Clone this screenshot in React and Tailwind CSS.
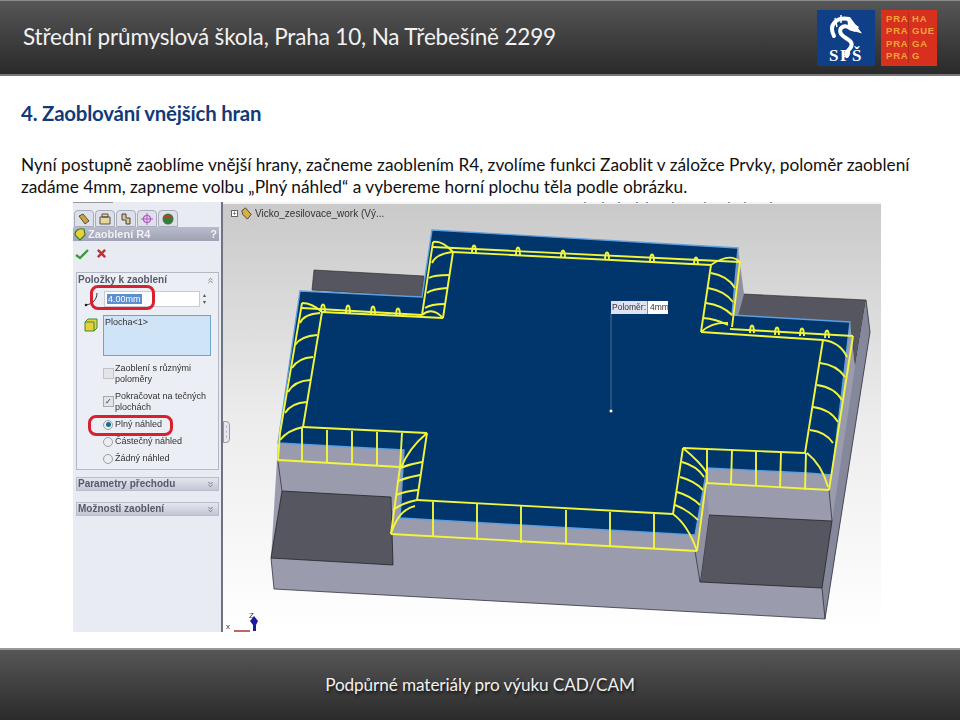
import { ChevronsUp, ChevronsDown } from "lucide-react";

const LATO = { fontFamily: "Lato, sans-serif" };
const UI_FONT = { fontFamily: "'Liberation Sans', sans-serif" };

// yellow edges of the fillet preview, page coordinates shifted into the figure
const edges = [
  [[302, 303], [280, 433], [278, 460]],
  [[322, 312], [303, 427]],
  [[303, 427], [427, 433]],
  [[278, 460], [400, 467]],
  [[302, 428], [302, 461]],
  [[327, 430], [327, 462]],
  [[352, 431], [352, 463]],
  [[377, 432], [377, 465]],
  [[402, 433], [400, 467]],
  [[427, 433], [417, 500]],
  [[400, 467], [391, 534]],
  [[417, 500], [673, 514]],
  [[391, 534], [697, 551]],
  [[433, 502], [433, 536]],
  [[477, 504], [477, 540]],
  [[521, 506], [521, 543]],
  [[566, 510], [566, 544]],
  [[610, 512], [610, 546]],
  [[654, 514], [654, 548]],
  [[673, 514], [683, 448]],
  [[697, 551], [706, 483]],
  [[683, 448], [805, 453]],
  [[706, 483], [829, 490]],
  [[707, 449], [707, 483]],
  [[732, 450], [731, 484]],
  [[756, 451], [756, 486]],
  [[781, 452], [780, 488]],
  [[806, 453], [805, 490]],
  [[805, 453], [823, 340]],
  [[829, 490], [853, 336]],
  [[701, 332], [823, 340]],
  [[730, 329], [853, 336]],
  [[701, 332], [711, 265]],
  [[732, 327], [740, 262]],
  [[711, 265], [453, 252]],
  [[433, 247], [740, 262]],
  [[453, 252], [443, 318]],
  [[433, 242], [422, 315]],
  [[443, 318], [322, 312]],
  [[422, 315], [302, 308]],
];

// curved ribs: start, control, end
const ribs = [
  [300, 323, 304, 314, 320, 313],
  [295, 345, 301, 336, 317, 335],
  [292, 368, 298, 358, 313, 357],
  [288, 392, 294, 381, 310, 380],
  [285, 413, 291, 403, 307, 402],
  [280, 440, 288, 430, 303, 427],
  [823, 340, 840, 342, 847, 357],
  [820, 363, 837, 365, 845, 377],
  [817, 385, 834, 387, 842, 400],
  [813, 407, 830, 409, 838, 422],
  [810, 430, 826, 432, 833, 443],
  [807, 453, 822, 465, 828, 487],
  [711, 265, 730, 252, 740, 262],
  [711, 273, 728, 276, 735, 288],
  [708, 288, 725, 291, 733, 302],
  [706, 303, 722, 305, 732, 315],
  [703, 318, 716, 319, 728, 325],
  [701, 332, 712, 322, 728, 323],
  [432, 263, 436, 254, 452, 252],
  [429, 278, 434, 275, 449, 275],
  [427, 293, 432, 289, 447, 288],
  [425, 308, 431, 304, 445, 304],
  [422, 315, 432, 306, 443, 318],
  [433, 242, 442, 240, 453, 252],
  [302, 303, 312, 303, 322, 312],
  [401, 468, 408, 449, 427, 433],
  [400, 468, 410, 464, 422, 462],
  [398, 481, 408, 477, 420, 475],
  [396, 495, 406, 491, 418, 490],
  [393, 510, 402, 503, 417, 500],
  [391, 534, 398, 510, 415, 506],
  [683, 448, 700, 462, 707, 473],
  [682, 462, 697, 466, 704, 477],
  [680, 477, 695, 481, 703, 490],
  [677, 492, 691, 496, 700, 505],
  [675, 505, 688, 510, 698, 520],
  [673, 514, 688, 525, 697, 551],
];

const loops = [
  [323, 312], [348, 313], [373, 314], [398, 316],
  [474, 253], [518, 255], [563, 258], [607, 260], [652, 262], [696, 265],
  [752, 333], [777, 335], [802, 336], [827, 338],
];

// bits of the cut-off toolbar along the top edge of the shot
const toolbarBits = [584, 602, 618, 636, 646, 672, 704, 728, 744, 770];

function Model() {
  return (
    <svg viewBox="223 202 658 430" className="absolute inset-0 w-full h-full">
      <rect x="223" y="202" width="658" height="2" fill="#f4f4f4" />
      {toolbarBits.map((x) => (
        <rect key={x} x={x} y="202" width="2" height="1" fill="#8a8f9c" />
      ))}
      {/* back walls */}
      <polygon points="314,270 424,276 422,297 312,290" fill="#55565f" stroke="#222" strokeWidth="0.6" />
      <polygon points="743,294 866,300 855,367 850,322 732,315" fill="#55565f" stroke="#222" strokeWidth="0.6" />
      <polygon points="738,248 744,294 738,316 732,315" fill="#8f91a3" />
      {/* body */}
      <polygon points="300,291 278,443 271,558 274,589 825,619 870,332 866,300 855,367 850,322 732,315 738,248 432,230 422,297" fill="#9a9cae" />
      <polygon points="866,300 870,332 825,619 822,588 855,367" fill="#85879a" />
      <polyline points="271,558 274,589 825,619 870,332 866,300" fill="none" stroke="#33343c" strokeWidth="0.8" />
      <polyline points="278,462 282,491" fill="none" stroke="#33343c" strokeWidth="0.8" />
      {/* pockets */}
      <polygon points="282,491 391,497 393,565 271,558" fill="#55565f" stroke="#22232a" strokeWidth="0.8" />
      <polygon points="709,515 832,521 822,588 700,582" fill="#55565f" stroke="#22232a" strokeWidth="0.8" />
      <polygon points="706,484 709,515 700,582 695,551" fill="#8f91a3" />
      <line x1="829" y1="490" x2="832" y2="521" stroke="#33343c" strokeWidth="0.8" />
      <line x1="822" y1="588" x2="825" y2="619" stroke="#33343c" strokeWidth="0.8" />
      <line x1="700" y1="582" x2="695" y2="551" stroke="#33343c" strokeWidth="0.8" />
      {/* top face */}
      <polygon
        points="300,291 422,297 432,230 738,248 732,315 850,322 832,475 807,473 707,468 695,535 555,527 400,518 404,450 278,443"
        fill="#00366b"
        stroke="#5f9fe0"
        strokeWidth="1.4"
      />
      <g fill="none" stroke="#f2f53c" strokeWidth="1.9" strokeLinejoin="round">
        {edges.map((pts, i) => (
          <polyline key={i} points={pts.map((p) => p.join(",")).join(" ")} />
        ))}
        {ribs.map((r, i) => (
          <path key={i} d={`M${r[0]} ${r[1]}Q${r[2]} ${r[3]} ${r[4]} ${r[5]}`} />
        ))}
        {loops.map(([x, y], i) => (
          <path key={i} d={`M${x - 2} ${y}C${x - 2} ${y - 10} ${x + 2} ${y - 10} ${x + 2} ${y}`} />
        ))}
      </g>
      <line x1="611" y1="313" x2="611" y2="410" stroke="#8a94a8" strokeWidth="0.6" />
      <circle cx="611" cy="411" r="1.8" fill="#fff" stroke="#333" strokeWidth="0.6" />
      {/* triad */}
      <path d="M254 616L250 621L253 625V631H256V625L258 621Z" fill="#1c1c9c" />
      <line x1="234" y1="631" x2="250" y2="631" stroke="#a33" strokeWidth="1.5" />
    </svg>
  );
}

function TabIcon({ children }) {
  return (
    <div className="w-[20px] h-[17px] bg-[#dfe1ea] border border-[#a9acba] rounded-t-sm flex items-center justify-center">
      <svg viewBox="0 0 14 14" className="w-[14px] h-[14px]">{children}</svg>
    </div>
  );
}

function Radio({ checked, label }) {
  return (
    <div className="flex items-center h-[17px] pl-[26px] gap-[1px]">
      <span className="w-[10px] h-[10px] rounded-full border border-[#9aa0a8] bg-[#eceef0] flex items-center justify-center">
        {checked && <span className="w-[5px] h-[5px] rounded-full bg-[#1d6a8a]" />}
      </span>
      <span className="ml-[1px]">{label}</span>
    </div>
  );
}

function Section({ title, className }) {
  return (
    <div className={`${className} h-[14px] ml-[3px] mr-[2px] bg-gradient-to-b from-[#e4e6ee] to-[#c4c7d4] border border-[#b9bcca] flex items-center justify-between pl-[1px] pr-[3px] text-[10px] font-bold text-[#555a6a]`}>
      {title}
      <ChevronsDown size={9} strokeWidth={2} className="text-[#666]" />
    </div>
  );
}

function Panel() {
  return (
    <div className="w-[150px] shrink-0 bg-[#e9ebf3] border-r-2 border-[#6f7280] text-[9px] leading-[10.5px] text-[#333]" style={UI_FONT}>
      <div className="h-[6px] border-t border-[#999] mr-[108px]" />
      <div className="flex gap-[1px] pl-[1px] h-[19px] items-end">
        <TabIcon>
          <path d="M2 4L6 2L12 9L8 12Z" fill="#c9a53a" stroke="#333" strokeWidth="0.8" />
        </TabIcon>
        <TabIcon>
          <path d="M2 5H12V12H2ZM4 2H10V5H4Z" fill="#e7d79a" stroke="#444" strokeWidth="0.9" />
        </TabIcon>
        <TabIcon>
          <path d="M3 2H7V6H11V12H7V8H3Z" fill="#d8c888" stroke="#333" strokeWidth="0.9" />
        </TabIcon>
        <TabIcon>
          <circle cx="7" cy="7" r="3.5" fill="none" stroke="#b050c0" strokeWidth="1.2" />
          <path d="M7 1V13M1 7H13" stroke="#b050c0" strokeWidth="1" />
        </TabIcon>
        <TabIcon>
          <circle cx="7" cy="7" r="5.5" fill="#3a7a3a" />
          <path d="M2 6A5.5 5.5 0 0 1 12 6Z" fill="#b8402a" />
        </TabIcon>
      </div>
      <div className="h-[14px] mr-[2px] bg-gradient-to-b from-[#b9bccb] to-[#9ea2b4] flex items-center justify-between pr-[2px] text-[11px] font-bold text-[#eef0f5]">
        <span className="flex items-center gap-[1px]">
          <svg viewBox="0 0 14 14" className="w-[14px] h-[14px]">
            <path d="M2 8C2 3 6 1 11 2L12 8L7 13Z" fill="#e8d038" stroke="#3a7a3a" strokeWidth="1.2" />
          </svg>
          Zaoblení R4
        </span>
        <span>?</span>
      </div>
      <div className="h-[25px] flex items-center gap-[7px] pl-[2px]">
        <svg viewBox="0 0 14 12" className="w-[14px] h-[12px]">
          <path d="M1 7L5 10L13 2" fill="none" stroke="#3c9a3c" strokeWidth="2.4" />
        </svg>
        <svg viewBox="0 0 12 12" className="w-[11px] h-[11px]">
          <path d="M2 2L10 10M10 2L2 10" fill="none" stroke="#c03030" strokeWidth="2.6" />
        </svg>
      </div>
      <div className="ml-[3px] mt-[6px] mr-[2px] h-[198px] border border-[#b4b7c4] bg-[#eceef5]">
        <div className="h-[14px] flex items-center justify-between pl-[1px] pr-[3px] font-bold text-[#555a6a] text-[10px]">
          Položky k zaoblení
          <ChevronsUp size={9} strokeWidth={2} className="text-[#666]" />
        </div>
        <div className="mt-[4px] flex items-center h-[16px]">
          <svg viewBox="0 0 20 16" className="w-[20px] h-[16px] ml-[6px]">
            <path d="M3 14C10 13 14 8 14 2" fill="none" stroke="#333" strokeWidth="1" />
            <circle cx="3" cy="14" r="1.3" fill="#222" />
          </svg>
          <div className="ml-[1px] w-[96px] h-[16px] bg-white border border-[#c8cbd4] flex items-center pl-[2px]">
            <span className="bg-[#5b8fd0] text-white px-[1px]">4.00mm</span>
          </div>
          <span className="ml-[3px] flex flex-col text-[6px] leading-[7px] text-[#555]">
            <span>▴</span>
            <span>▾</span>
          </span>
        </div>
        <div className="mt-[8px] flex">
          <svg viewBox="0 0 14 14" className="w-[14px] h-[14px] ml-[7px] mt-[3px] shrink-0">
            <path d="M1 4L4 1H13V10L10 13H1Z" fill="#e8d038" stroke="#3a8a3a" strokeWidth="1" />
            <path d="M1 4H10V13" fill="none" stroke="#3a8a3a" strokeWidth="1" />
          </svg>
          <div className="ml-[5px] w-[108px] h-[41px] bg-[#cfe4f6] border border-[#6aa5cc] pl-[1px] pt-[1px]">
            Plocha&lt;1&gt;
          </div>
        </div>
        <div className="mt-[6px] pl-[26px] flex items-center gap-[1px] h-[23px]">
          <span className="w-[11px] h-[11px] bg-[#e3e4e8] border border-[#c0c2c8] shrink-0" />
          <span>
            Zaoblení s různými
            <br />
            poloměry
          </span>
        </div>
        <div className="mt-[5px] pl-[26px] flex items-center gap-[1px] h-[23px]">
          <span className="w-[11px] h-[11px] bg-[#e3e4e8] border border-[#a8aab0] shrink-0 flex items-center justify-center text-[8px] leading-none">
            ✓
          </span>
          <span>
            Pokračovat na tečných
            <br />
            plochách
          </span>
        </div>
        <div className="mt-[3px]">
          <Radio checked label="Plný náhled" />
          <Radio label="Částečný náhled" />
          <Radio label="Žádný náhled" />
        </div>
      </div>
      <Section title="Parametry přechodu" className="mt-[7px]" />
      <Section title="Možnosti zaoblení" className="mt-[11px]" />
    </div>
  );
}

function Logos() {
  return (
    <div className="flex gap-[6px] mr-[23px]">
      <div className="relative w-[58px] h-[56px] bg-[#0f3f86] overflow-hidden">
        <svg viewBox="0 0 58 56" className="absolute inset-0 w-full h-full">
          <path d="M17 26C11 14 20 7 32 9L40 20L33 18C27 14 21 18 24 24C29 30 37 30 34 37C32 41 27 42 30 46" fill="none" stroke="#fff" strokeWidth="4" strokeLinecap="round" />
          <path d="M30 9L42 17L38 22L32 20Z" fill="#fff" />
          <path d="M16 25L14 15M20 17L18 8M24 13L24 5" stroke="#fff" strokeWidth="1.5" />
        </svg>
        <div className="absolute bottom-[2px] inset-x-0 text-center text-white font-bold text-[17px] leading-[17px] tracking-[1.5px]" style={{ fontFamily: "'Liberation Serif', serif" }}>
          SPŠ
        </div>
      </div>
      <div className="w-[56px] h-[56px] bg-[#d8301e] grid grid-cols-[28px_28px] content-center text-[#f2a33a] text-[9.5px] leading-[12.5px] font-bold tracking-[0.8px]" style={{ fontFamily: "'Liberation Sans', sans-serif" }}>
        <span className="pl-[5px] border-r border-[#b3281a]">PRA</span>
        <span className="pl-[3px]">HA</span>
        <span className="pl-[5px] border-r border-[#b3281a]">PRA</span>
        <span className="pl-[3px]">GUE</span>
        <span className="pl-[5px] border-r border-[#b3281a]">PRA</span>
        <span className="pl-[3px]">GA</span>
        <span className="pl-[5px] border-r border-[#b3281a]">PRA</span>
        <span className="pl-[3px]">G</span>
      </div>
    </div>
  );
}

export default function App() {
  return (
    <div className="w-[960px] h-[720px] bg-white flex flex-col overflow-hidden" style={LATO}>
      <header className="h-[76px] shrink-0 flex items-center justify-between bg-gradient-to-b from-[#565656] to-[#2b2a2a] border-t border-[#8a8a8a] border-b-2 border-b-[#777]">
        <h1 className="ml-[23px] mb-[2px] text-[#f2f2f2] text-[22.5px] font-normal tracking-[-0.15px]">
          Střední průmyslová škola, Praha 10, Na Třebešíně 2299
        </h1>
        <Logos />
      </header>
      <main className="flex-1 flex flex-col">
        <h2 className="mt-[25px] ml-[21px] h-[24px] text-[20.4px] leading-[24px] font-bold text-[#123a78] tracking-[-0.2px]">
          4. Zaoblování vnějších hran
        </h2>
        <p className="mt-[29px] ml-[21px] text-[17.25px] leading-[22px] text-[#111] whitespace-pre-line">
          {"Nyní postupně zaoblíme vnější hrany, začneme zaoblením R4, zvolíme funkci Zaoblit v záložce Prvky, poloměr zaoblení\nzadáme 4mm, zapneme volbu „Plný náhled“ a vybereme horní plochu těla podle obrázku."}
        </p>
        <figure className="relative ml-[73px] mt-[4px] w-[808px] h-[430px] flex blur-[0.3px]">
          <Panel />
          <div className="relative flex-1 bg-gradient-to-b from-[#c9c9c9] via-[#ececec] to-white">
            <Model />
            <div className="absolute left-[8px] top-[4px] flex items-center gap-[2px] text-[10px] text-[#333]" style={UI_FONT}>
              <span className="w-[7px] h-[7px] border border-[#666] bg-white text-[7px] leading-[5px] text-center">+</span>
              <svg viewBox="0 0 14 14" className="w-[13px] h-[13px]">
                <path d="M2 4L6 1L12 8L8 13L3 8Z" fill="#d8b040" stroke="#333" strokeWidth="0.9" />
              </svg>
              Vicko_zesilovace_work  (Vý...
            </div>
            <div className="absolute left-[388px] top-[99px] flex h-[13px] text-[8.5px] leading-[13px] text-[#333]" style={UI_FONT}>
              <span className="w-[36px] bg-[#dfe2f0] pl-[1px]">Poloměr:</span>
              <span className="w-[21px] bg-white pl-[2px] border-l border-[#889]">4mm</span>
            </div>
            <span className="absolute left-[26px] top-[409px] text-[8px] leading-[9px] text-[#333]" style={UI_FONT}>Z</span>
            <span className="absolute left-[3px] top-[420px] text-[8px] leading-[9px] text-[#333]" style={UI_FONT}>x</span>
          </div>
          {/* red marks drawn over the panel */}
          <span className="absolute left-[17px] top-[83px] w-[65px] h-[25px] rounded-[8px] border-[3.5px] border-[#d8202e]" />
          <span className="absolute left-[15px] top-[213px] w-[85px] h-[21px] rounded-[8px] border-[3.5px] border-[#d8202e]" />
          <span className="absolute left-[150px] top-[219px] w-[7px] h-[22px] bg-[#e6e8f0] border border-[#999] rounded-r-sm text-[5px] leading-[5px] text-center text-[#555] pt-[2px]">
            ‹<br />‹<br />‹
          </span>
        </figure>
      </main>
      <footer className="h-[72px] shrink-0 flex items-center justify-center bg-gradient-to-b from-[#565656] to-[#2c2b2c] border-t-2 border-[#999]">
        <span className="text-[#f0f0f0] text-[17.2px] tracking-[-0.1px] [text-shadow:1px_2px_3px_#111]">
          Podpůrné materiály pro výuku CAD/CAM
        </span>
      </footer>
    </div>
  );
}
